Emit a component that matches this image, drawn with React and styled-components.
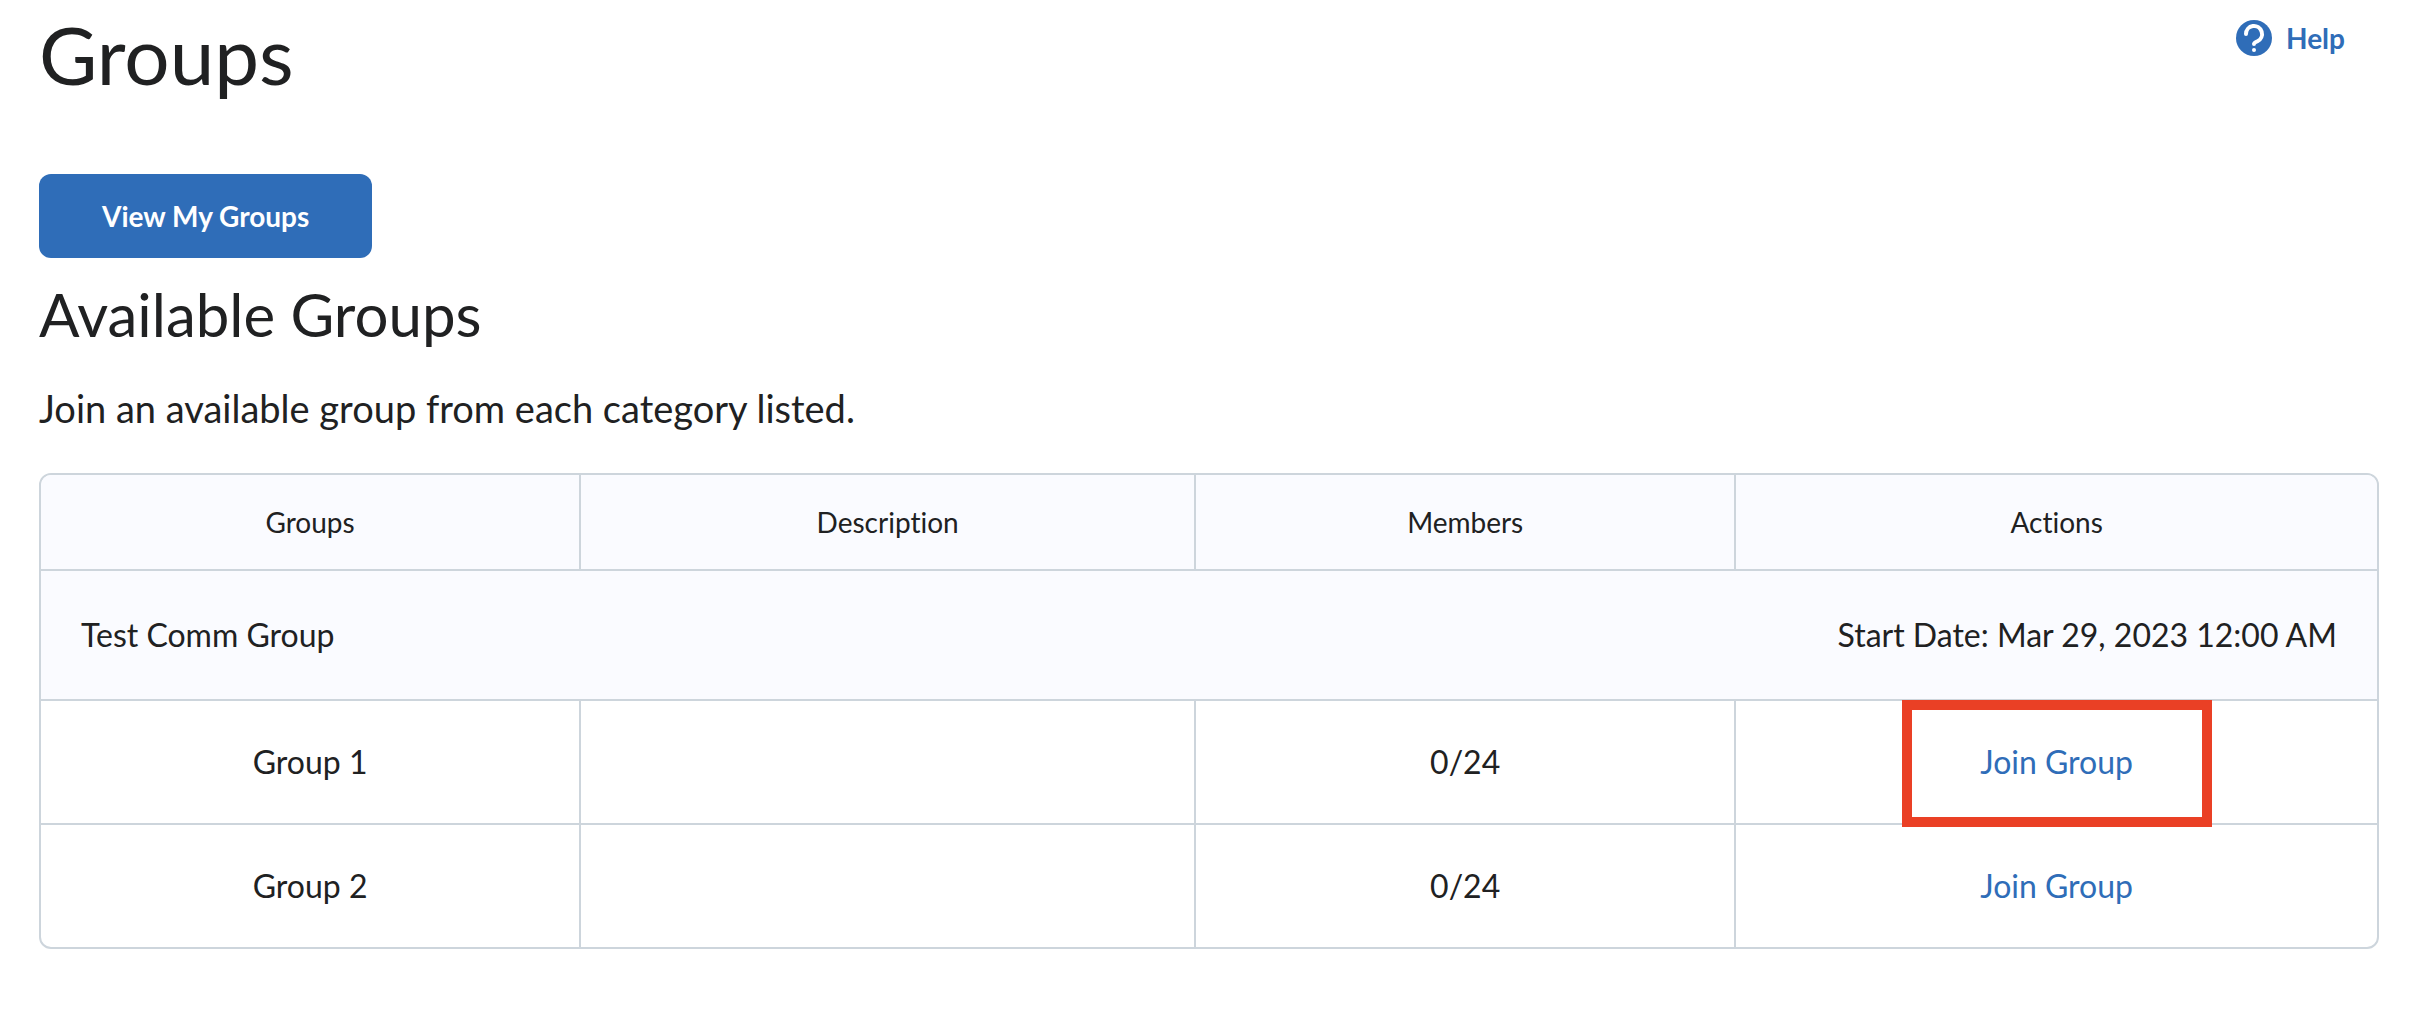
import React from 'react';
import styled, { createGlobalStyle, css } from 'styled-components';

const GlobalStyle = createGlobalStyle`
  *, *::before, *::after { box-sizing: border-box; }
  body {
    margin: 0;
    background: #ffffff;
    color: #202122;
    font-family: Lato, "Open Sans", sans-serif;
    font-size: 32px;
    font-weight: 400;
    font-variant-ligatures: none;
  }
`;

const line = '#cdd5dc';
const blue = '#2f6db8';

const Page = styled.main`
  padding: 14px 49px 60px 39px;
`;

const Header = styled.header`
  display: flex;
  justify-content: space-between;
  align-items: flex-start;
  padding-right: 34px;
`;

const Title = styled.h1`
  margin: 0;
  font-size: 80px;
  line-height: 80px;
  font-weight: 400;
`;

const HelpButton = styled.button`
  display: flex;
  align-items: center;
  gap: 14px;
  margin-top: 6px;
  padding: 0;
  border: 0;
  background: none;
  color: ${blue};
  font: inherit;
  font-size: 28px;
  line-height: 36px;
  font-weight: 700;
  cursor: pointer;
`;

const PrimaryButton = styled.button`
  display: block;
  margin-top: 80px;
  padding: 24px 63px;
  border: 0;
  border-radius: 12px;
  background: ${blue};
  color: #ffffff;
  font: inherit;
  font-size: 28px;
  line-height: 36px;
  font-weight: 700;
  cursor: pointer;
`;

const SectionTitle = styled.h2`
  margin: 26px 0 0;
  font-size: 60px;
  line-height: 60px;
  font-weight: 400;
`;

const Intro = styled.p`
  margin: 36px 0 37px;
  font-size: 38px;
  line-height: 56px;
`;

const Table = styled.table`
  width: 100%;
  table-layout: fixed;
  border: 2px solid ${line};
  border-collapse: separate;
  border-spacing: 0;
  border-radius: 12px;
  overflow: hidden;
`;

const Column = styled.col`
  width: ${({ $share }) => $share}%;
`;

const cell = css`
  padding: 41px 40px;
  border-right: 2px solid ${line};
  border-bottom: 2px solid ${line};
  line-height: 40px;
  font-weight: 400;
  text-align: center;
  &:last-child { border-right: 0; }
`;

const HeadCell = styled.th`
  ${cell}
  padding: 29px 40px;
  background: #fafbff;
  font-size: 28px;
  line-height: 36px;
`;

const CategoryCell = styled.th`
  ${cell}
  padding: 44px 40px;
  background: #fafbff;
`;

const CategoryBar = styled.div`
  display: flex;
  justify-content: space-between;
`;

const Cell = styled.td`
  ${cell}
  position: relative;
  tr:last-child > & { border-bottom: 0; }

  ${({ $marked }) => $marked && css`
    &::after {
      content: '';
      position: absolute;
      top: -1px;
      bottom: -4px;
      left: calc(50% - 155px);
      width: 310px;
      border: 10px solid #ea4025;
      z-index: 1;
      pointer-events: none;
    }
  `}
`;

const JoinLink = styled.a`
  color: ${blue};
  text-decoration: none;
`;

const columns = [
  { name: 'Groups', share: 23.1 },
  { name: 'Description', share: 26.3 },
  { name: 'Members', share: 23.1 },
  { name: 'Actions', share: 27.4 },
];

const groups = [
  { name: 'Group 1', description: '', members: '0/24', marked: true },
  { name: 'Group 2', description: '', members: '0/24', marked: false },
];

function HelpIcon() {
  return (
    <svg width="36" height="36" viewBox="0 0 36 36" fill="none" aria-hidden="true">
      <circle cx="18" cy="18" r="18" fill={blue} />
      <path
        d="M10 14a8 8 0 1 1 11.5 7.2C19.5 22.2 18 22.8 18 24"
        stroke="#ffffff"
        strokeWidth="4"
        strokeLinecap="round"
        strokeLinejoin="round"
      />
      <circle cx="18" cy="30" r="2" fill="#ffffff" />
    </svg>
  );
}

export default function App() {
  return (
    <>
      <GlobalStyle />
      <Page>
        <Header>
          <Title>Groups</Title>
          <HelpButton type="button">
            <HelpIcon />
            Help
          </HelpButton>
        </Header>
        <PrimaryButton type="button">View My Groups</PrimaryButton>
        <SectionTitle>Available Groups</SectionTitle>
        <Intro>Join an available group from each category listed.</Intro>
        <Table>
          <colgroup>
            {columns.map((c) => <Column key={c.name} $share={c.share} />)}
          </colgroup>
          <thead>
            <tr>
              {columns.map((c) => <HeadCell key={c.name} scope="col">{c.name}</HeadCell>)}
            </tr>
          </thead>
          <tbody>
            <tr>
              <CategoryCell colSpan={4} scope="colgroup">
                <CategoryBar>
                  <span>Test Comm Group</span>
                  <span>Start Date: Mar 29, 2023 12:00 AM</span>
                </CategoryBar>
              </CategoryCell>
            </tr>
            {groups.map((g) => (
              <tr key={g.name}>
                <Cell>{g.name}</Cell>
                <Cell>{g.description}</Cell>
                <Cell>{g.members}</Cell>
                <Cell $marked={g.marked}>
                  <JoinLink href="#join">Join Group</JoinLink>
                </Cell>
              </tr>
            ))}
          </tbody>
        </Table>
      </Page>
    </>
  );
}
